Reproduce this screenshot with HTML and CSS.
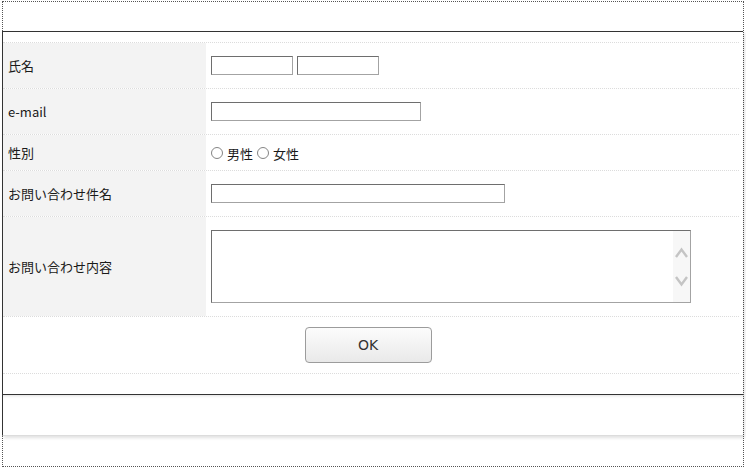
FILE: index.html
```html
<!DOCTYPE html>
<html lang="ja">
<head>
<meta charset="utf-8">
<title>お問い合わせ</title>
<link rel="stylesheet" href="styles.css">
</head>
<body>
<div class="frame">
  <div class="box">
    <div class="form">
      <div class="row h46">
        <div class="label">氏名</div>
        <div class="field"><input class="txt w82" type="text"><input class="txt w82" type="text"></div>
      </div>
      <div class="row h46">
        <div class="label">e-mail</div>
        <div class="field"><input class="txt w210" type="text"></div>
      </div>
      <div class="row h36">
        <div class="label">性別</div>
        <div class="field">
          <label class="opt"><span class="radio"></span>男性</label>
          <label class="opt"><span class="radio"></span>女性</label>
        </div>
      </div>
      <div class="row h46">
        <div class="label">お問い合わせ件名</div>
        <div class="field"><input class="txt w294" type="text"></div>
      </div>
      <div class="row h100">
        <div class="label">お問い合わせ内容</div>
        <div class="field">
          <div class="ta">
            <textarea class="ta-input"></textarea>
            <div class="scroll">
              <svg width="17" height="71" viewBox="0 0 17 71">
                <path d="M3 26 L8.5 18.5 L14 26" fill="none" stroke="#c4c4c4" stroke-width="2.4"/>
                <path d="M3 46 L8.5 53.5 L14 46" fill="none" stroke="#c4c4c4" stroke-width="2.4"/>
              </svg>
            </div>
          </div>
        </div>
      </div>
      <div class="row ok">
        <button class="btn" type="button">OK</button>
      </div>
    </div>
    <div class="foot"></div>
  </div>
</div>
</body>
</html>
```
FILE: styles.css
```css
html, body {
  margin: 0;
  padding: 0;
  background: #fff;
}
body {
  font-family: "Noto Sans CJK JP", "Noto Sans", sans-serif;
  font-size: 13px;
  color: #1a1a1a;
}
.frame {
  box-sizing: border-box;
  width: 742px;
  height: 466px;
  margin: 1px 2px 0 2px;
  border: 1px dotted #555;
  padding-top: 29px;
}
.box {
  margin-left: -1px;
  border-top: 1px solid #333;
  border-left: 1px solid #333;
  border-bottom: 1px solid #dcdcdc;
  background: #fff;
  box-shadow: 2px 2px 3px rgba(0, 0, 0, 0.12);
}
.form {
  margin-right: 4px;
  padding-top: 10px;
  padding-bottom: 20px;
}
.row {
  box-sizing: border-box;
  display: flex;
  border-top: 1px dotted #dcdcdc;
}
.h46 { height: 46px; }
.h36 { height: 36px; }
.h100 { height: 100px; }
.label {
  box-sizing: border-box;
  width: 203px;
  flex: none;
  background: #f3f3f3;
  padding-left: 5px;
  display: flex;
  align-items: center;
  line-height: 1;
}
.field {
  flex: 1;
  display: flex;
  align-items: center;
  gap: 4px;
  padding-left: 5px;
}
.txt {
  box-sizing: border-box;
  height: 19px;
  margin: 0;
  padding: 0 2px;
  border: 1px solid;
  border-color: #6e6e6e #a3a3a3 #a3a3a3 #6e6e6e;
  background: #fff;
  font: inherit;
}
.w82 { width: 82px; }
.w210 { width: 210px; }
.w294 { width: 294px; }
.opt {
  display: flex;
  align-items: center;
  margin-right: 0;
  line-height: 1;
  padding-top: 2px;
}
.radio {
  box-sizing: border-box;
  width: 12px;
  height: 12px;
  border: 1px solid #858585;
  border-radius: 50%;
  background: #fff;
  margin-right: 4px;
  margin-top: -2px;
}
.ta {
  box-sizing: border-box;
  width: 480px;
  height: 73px;
  display: flex;
  border: 1px solid;
  border-color: #6e6e6e #a3a3a3 #a3a3a3 #6e6e6e;
  background: #fff;
}
.ta-input {
  flex: 1;
  border: 0;
  margin: 0;
  padding: 2px;
  resize: none;
  overflow: hidden;
  outline: none;
  font: inherit;
}
.scroll {
  width: 17px;
  flex: none;
  background: #f7f7f7;
}
.scroll svg {
  display: block;
}
.ok {
  height: 58px;
  border-bottom: 1px dotted #dcdcdc;
  justify-content: center;
  align-items: center;
  padding-right: 6px;
}
.btn {
  box-sizing: border-box;
  width: 127px;
  height: 36px;
  margin: 0;
  border: 1px solid #9c9c9c;
  border-radius: 4px;
  background: linear-gradient(#fcfcfc, #e9e9e9);
  font-family: "DejaVu Sans", sans-serif;
  font-size: 14px;
  color: #333;
  padding: 0;
}
.foot {
  height: 41px;
  box-sizing: border-box;
  border-top: 1px solid #333;
  box-shadow: inset 0 3px 3px -2px rgba(0, 0, 0, 0.12);
}
```
